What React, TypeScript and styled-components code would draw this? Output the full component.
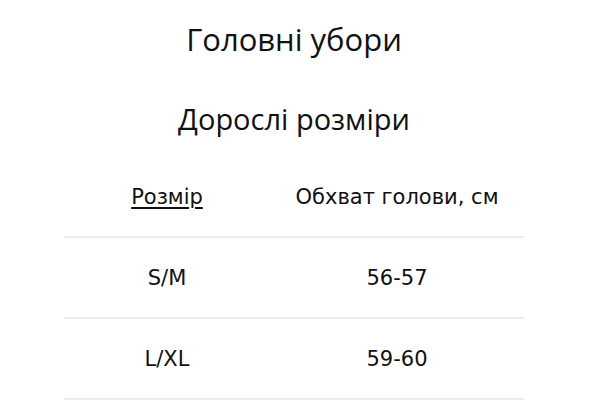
import React from "react";
import styled, { createGlobalStyle } from "styled-components";

const GlobalStyle = createGlobalStyle`
  body {
    margin: 0;
    background: #ffffff;
    color: #111111;
    font-family: "Open Sans", "Noto Sans", sans-serif;
  }
`;

const Page = styled.main`
  width: 460px;
  margin-left: 64px;
  padding-top: 16px;
`;

const Title = styled.h1`
  margin: 0;
  font-size: 31px;
  line-height: 46px;
  font-weight: 400;
  text-align: center;
`;

const Subtitle = styled.h2`
  margin: 37px 0 0;
  font-size: 29px;
  line-height: 40px;
  font-weight: 400;
  text-align: center;
`;

const Table = styled.table`
  width: 100%;
  margin-top: 18px;
  border-collapse: collapse;
  font-family: "DejaVu Sans", sans-serif;
  font-size: 21px;
`;

const Cell = styled.td<{ $wide?: boolean }>`
  width: ${(p) => (p.$wide ? "254px" : "206px")};
  height: 79px;
  padding: 0;
  text-align: center;
  vertical-align: middle;
  border-bottom: 2px solid #ebebeb;
`;

const HeadCell = styled(Cell).attrs({ as: "th" })`
  font-weight: 400;
`;

const SizeLink = styled.a`
  color: inherit;
  text-decoration: underline;
  text-underline-offset: 3px;
`;

const rows = [
  { size: "S/M", girth: "56-57" },
  { size: "L/XL", girth: "59-60" },
];

export default function App() {
  return (
    <Page>
      <GlobalStyle />
      <Title>Головні убори</Title>
      <Subtitle>Дорослі розміри</Subtitle>
      <Table>
        <thead>
          <tr>
            <HeadCell>
              <SizeLink href="#">Розмір</SizeLink>
            </HeadCell>
            <HeadCell $wide>Обхват голови, см</HeadCell>
          </tr>
        </thead>
        <tbody>
          {rows.map((r) => (
            <tr key={r.size}>
              <Cell>{r.size}</Cell>
              <Cell $wide>{r.girth}</Cell>
            </tr>
          ))}
        </tbody>
      </Table>
    </Page>
  );
}
